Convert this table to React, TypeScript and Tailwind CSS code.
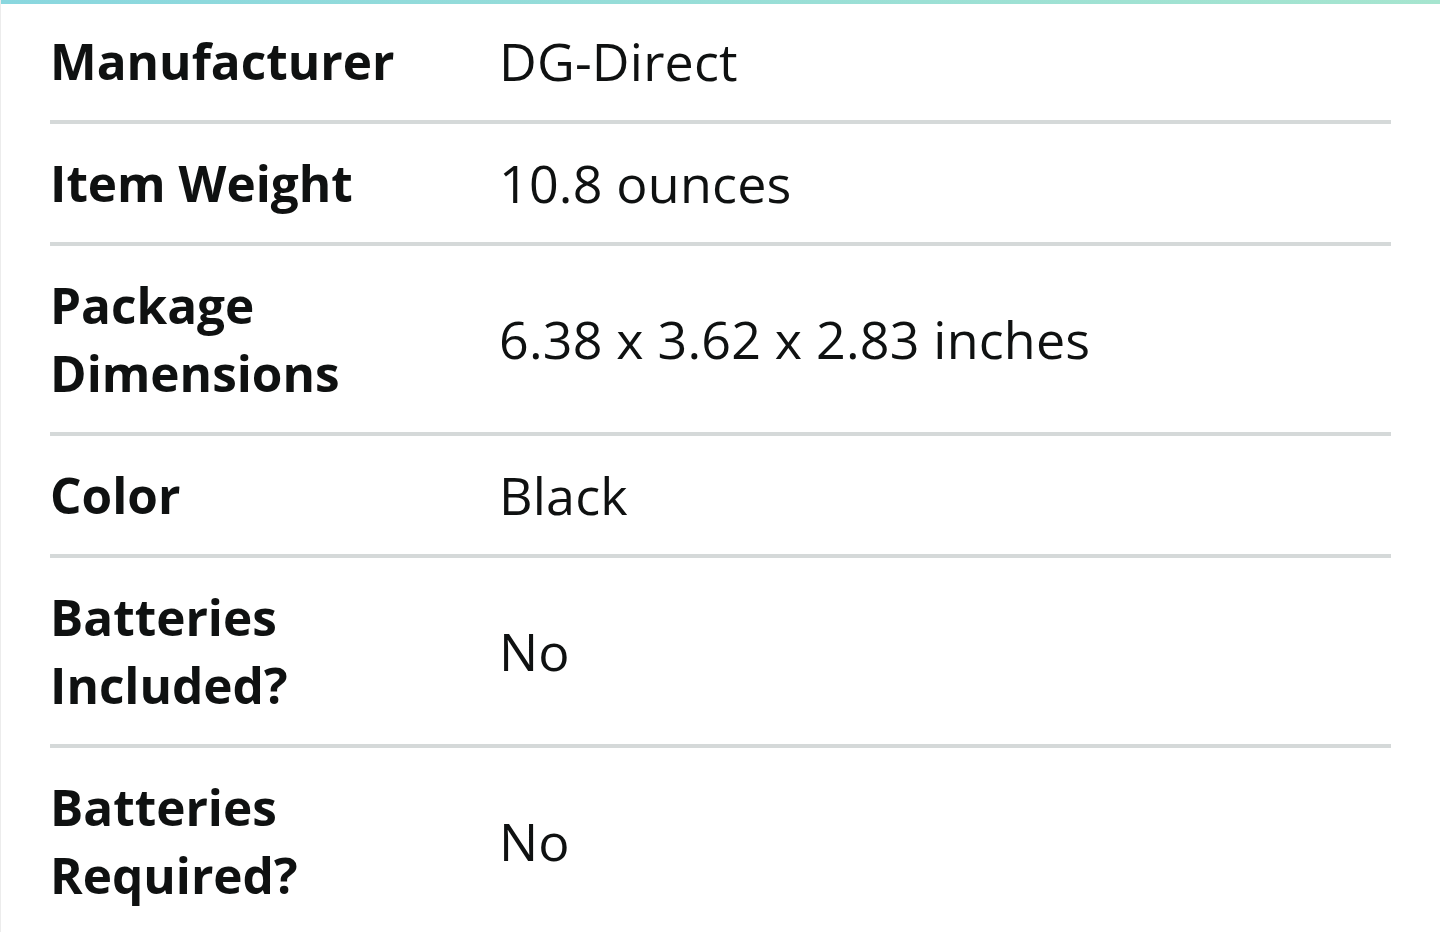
const rows = [
  { label: 'Manufacturer', value: 'DG-Direct' },
  { label: 'Item Weight', value: '10.8 ounces' },
  { label: 'Package Dimensions', value: '6.38 x 3.62 x 2.83 inches', wrap: true },
  { label: 'Color', value: 'Black' },
  { label: 'Batteries Included?', value: 'No', wrap: true },
  { label: 'Batteries Required?', value: 'No', wrap: true },
]

export default function App() {
  return (
    <div
      className="w-[1440px] h-[932px] overflow-hidden bg-white border-l border-[#ececec] text-[#0f1111]"
      style={{ fontFamily: '"Open Sans", "Noto Sans", sans-serif' }}
    >
      {/* accent strip */}
      <div className="h-1 bg-gradient-to-r from-[#8ad7df] to-[#a6e5cf]" />

      <div className="px-[49px]">
        {rows.map((r, i) => (
          <div
            key={r.label}
            className={`flex items-center ${i === 0 ? 'pt-[23px] pb-[25px]' : 'py-[25px]'} ${i < rows.length - 1 ? 'border-b-4 border-[#d5d9d9]' : ''}`}
          >
            <div className="w-[449px] shrink-0 pr-8 text-[49.5px] leading-[68px] font-bold">
              {r.wrap ? (
                r.label.split(' ').map((w) => (
                  <div key={w}>{w}</div>
                ))
              ) : (
                r.label
              )}
            </div>
            <div className="text-[52px] leading-[68px] tracking-[0.2px]">{r.value}</div>
          </div>
        ))}
      </div>
    </div>
  )
}
